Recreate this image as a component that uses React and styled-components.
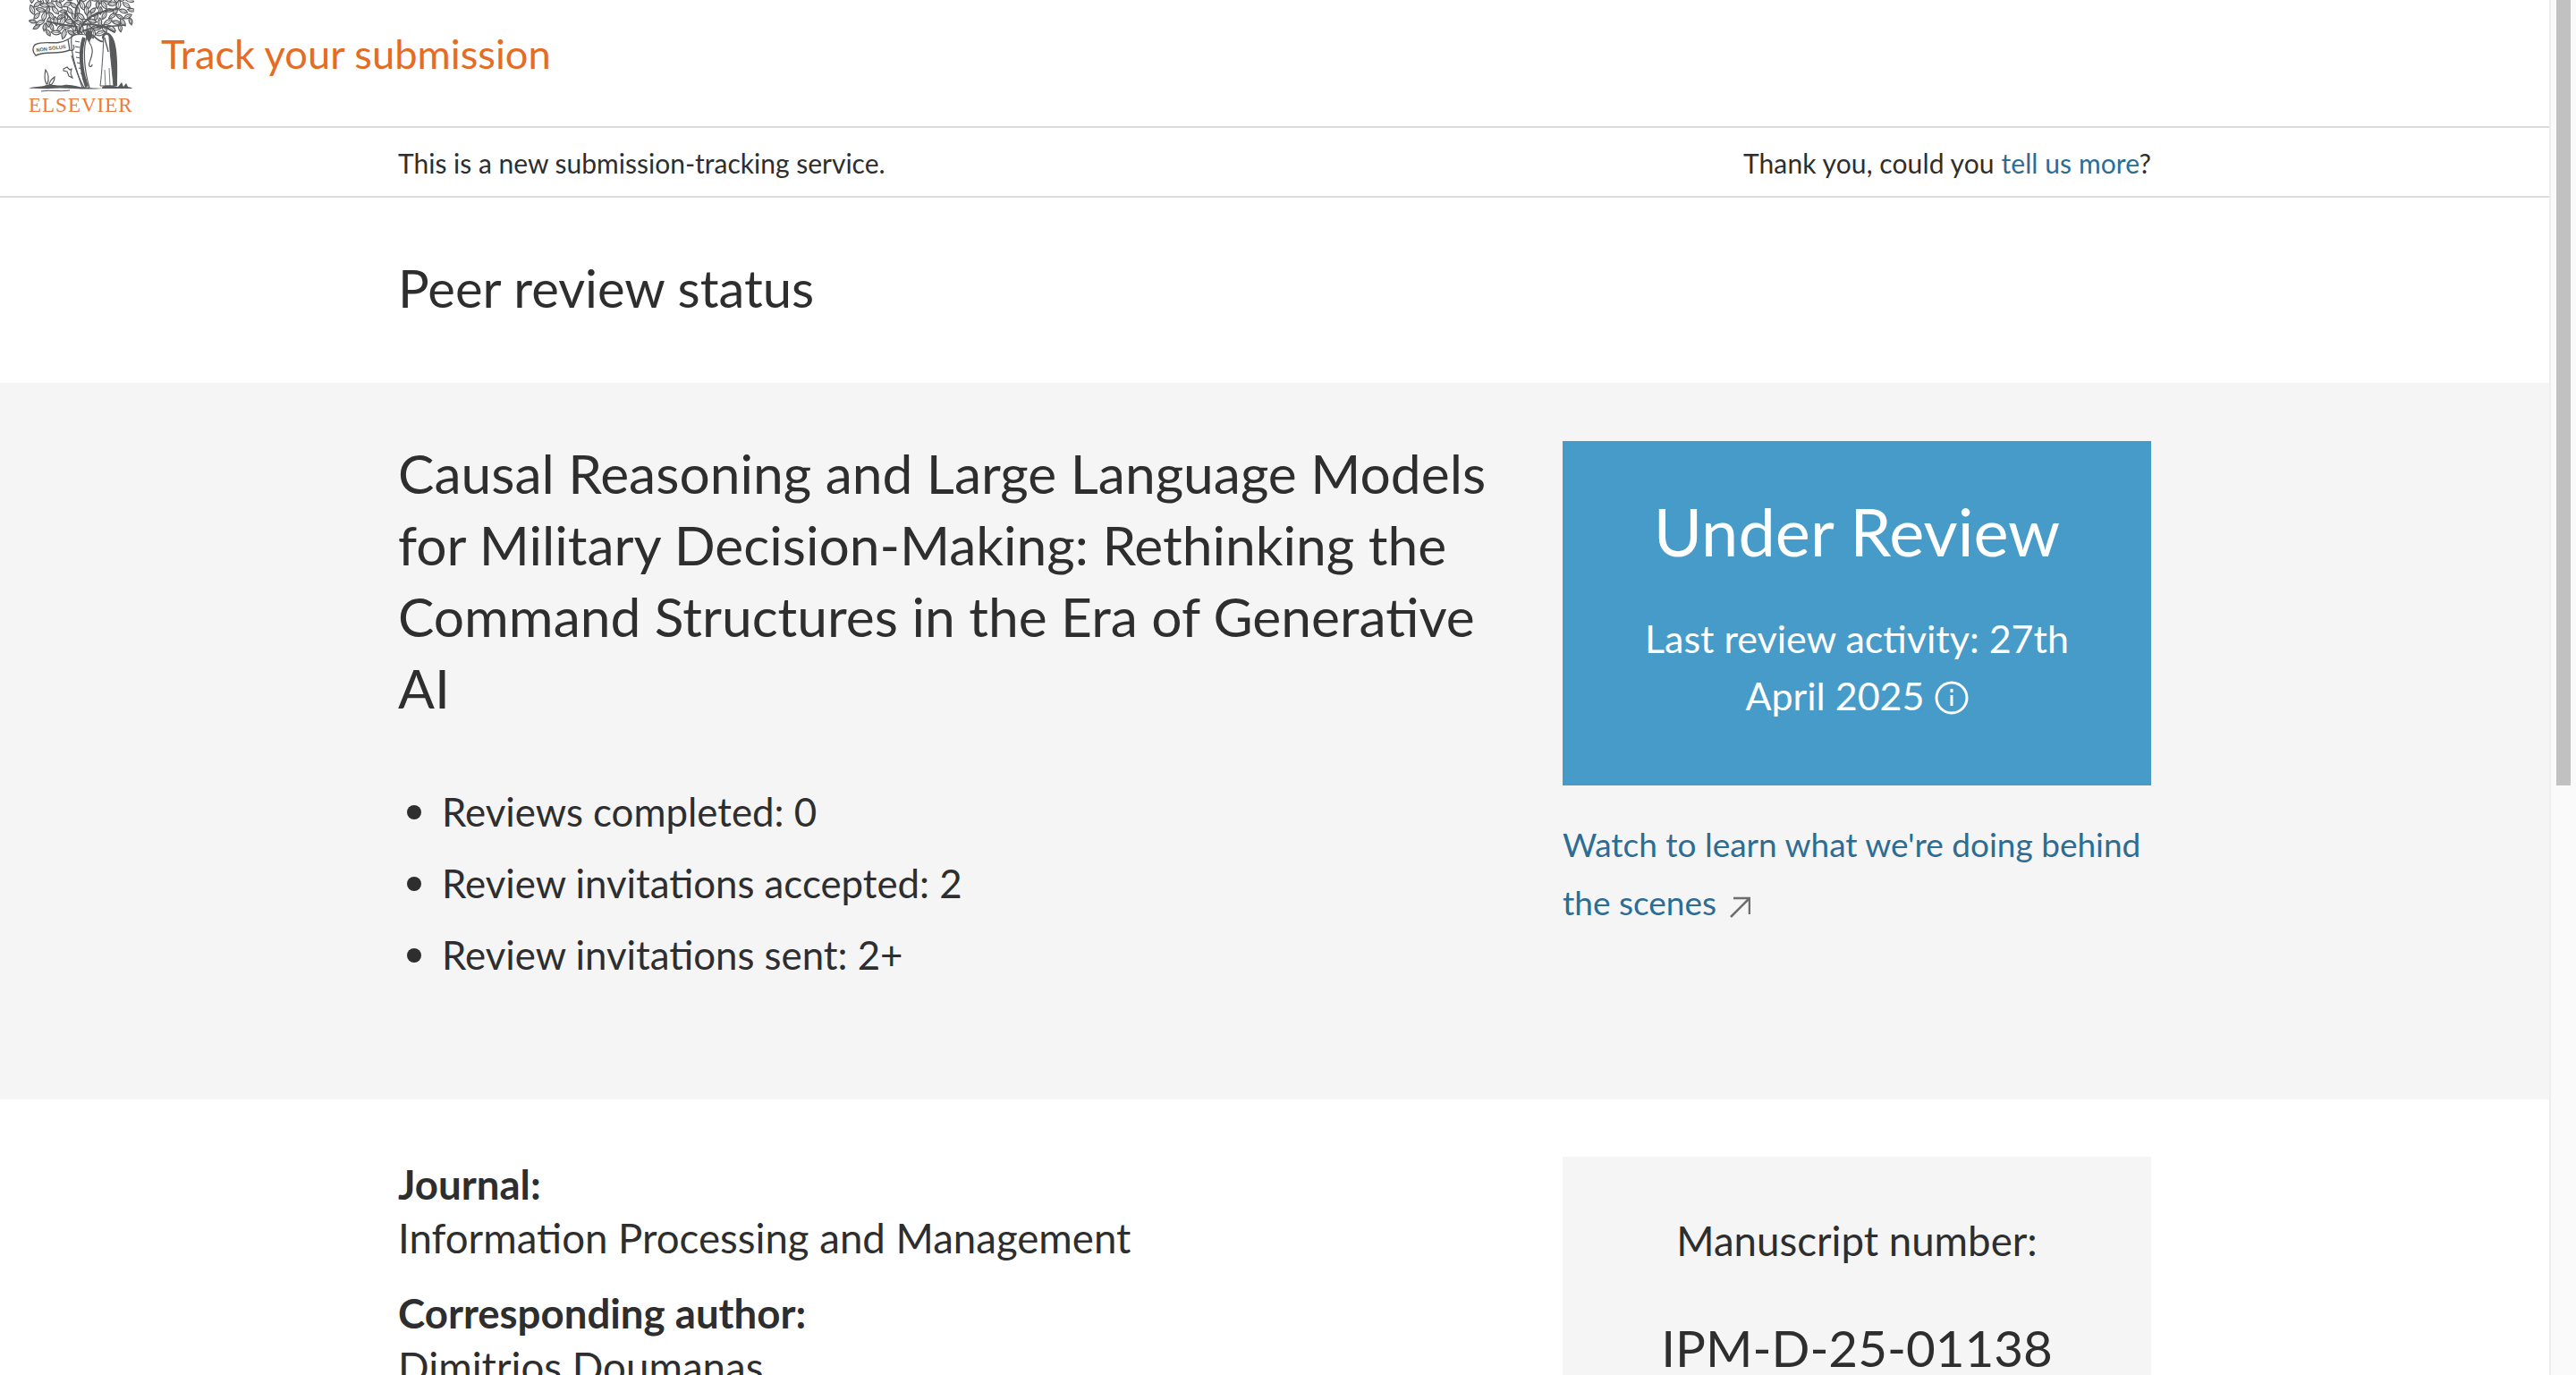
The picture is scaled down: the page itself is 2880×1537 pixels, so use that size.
import React from "react";
import styled, { createGlobalStyle } from "styled-components";

const Global = createGlobalStyle`
  html, body { margin: 0; padding: 0; height: 100%; overflow: hidden; background: #fff; }
  body { font-family: Lato, "Noto Sans", sans-serif; color: #2e2e2e; }
`;
const Shell = styled.div`display: flex; height: 1537px; overflow: hidden;`;
const Page = styled.main`flex: 1; min-width: 0; overflow: hidden;`;
const Track = styled.aside`flex: none; width: 30px; box-sizing: border-box; border-left: 2px solid #eee; background: #fafafa; padding-left: 6px;`;
const Thumb = styled.div`height: 878px; width: 16px; background: #c1c1c1;`;
const Header = styled.header`height: 141px; border-bottom: 2px solid #dcdcdc; display: flex; align-items: flex-start; padding-left: 32px; gap: 30px;`;
const Brand = styled.a`color: #e46c24; font-size: 45.3px; line-height: 120px;`;
const Wrap = styled.div`width: 1960px; margin: 0 auto;`;
const NoticeBar = styled.div`height: 76px; border-bottom: 2px solid #dcdcdc;`;
const NoticeRow = styled(Wrap)`display: flex; justify-content: space-between; align-items: center; height: 100%; box-sizing: border-box; padding-top: 2px; font-size: 30px;`;
const Feedback = styled.span`letter-spacing: 0.1px;`;
const Link = styled.a`color: #2d6c94;`;
const Heading = styled.h1`margin: 0; font-weight: 400; font-size: 58px; height: 207px; line-height: 202px;`;
const Band = styled.section`background: #f5f5f5; height: 801px; padding-top: 65px; box-sizing: border-box;`;
const Columns = styled(Wrap)`display: grid; grid-template-columns: 1fr 658px; column-gap: 47px;`;
const Title = styled.h2`margin: -4px 0 58px; font-weight: 400; font-size: 60.5px; line-height: 80px;`;
const Stats = styled.ul`margin: 0; padding: 0 0 0 49px; list-style: none; font-size: 43.8px; line-height: 80px;`;
const Stat = styled.li`
  position: relative;
  &::before {
    content: "";
    position: absolute;
    left: -39px;
    top: 33px;
    width: 16px;
    height: 16px;
    border-radius: 50%;
    background: #2e2e2e;
  }
`;
const StatusBox = styled.div`background: #479bc9; color: #fff; height: 385px; box-sizing: border-box; padding: 48px 20px 0; text-align: center;`;
const StatusTitle = styled.div`font-size: 74px; line-height: 106px; margin-bottom: 35px;`;
const StatusText = styled.div`font-size: 43px; line-height: 64px;`;
const Watch = styled(Link)`display: block; margin-top: 33px; font-size: 37px; line-height: 65px;`;
const Details = styled(Wrap)`display: grid; grid-template-columns: 1fr 658px; column-gap: 47px; padding-top: 64px;`;
const Label = styled.div`font-weight: 700; font-size: 45.6px; line-height: 61px;`;
const Value = styled.div`font-size: 45.6px; line-height: 60px; margin-bottom: 23px;`;
const Card = styled.div`background: #f5f5f5; text-align: center; padding-top: 62px; height: 400px;`;
const CardLabel = styled.div`font-size: 45.6px; line-height: 64px;`;
const CardValue = styled.div`font-size: 56.5px; line-height: 80px; margin-top: 47px;`;

const ink = "#58595b";
const hash = (a, b) => {
  const v = Math.sin(a * 12.9898 + b * 78.233) * 43758.5453;
  return v - Math.floor(v);
};
const leaves = [];
for (let r = 0; r < 7; r++) {
  for (let c = 0; c < 14; c++) {
    const x = 4 + c * 8.4 + (r % 2) * 4 + hash(r, c) * 2;
    const y = -2 + r * 6.4 + hash(c, r) * 2;
    const inside = Math.abs((x - 58) / 60) ** 3 + Math.abs((y - 10) / 29) ** 3 < 1;
    if (inside) leaves.push({ x, y, a: hash(r + 3, c + 7) * 180, l: 4.2 + hash(c + 5, r + 1) * 1.6 });
  }
}

const Logo = () => (
  <svg width="118" height="130" viewBox="0 0 118 130" style={{ flex: "none" }}>
    {leaves.map((f, i) => (
      <g key={i} transform={`translate(${f.x} ${f.y}) rotate(${f.a})`}>
        <path d={`M${-f.l} 0Q0 ${-f.l * 0.85} ${f.l} 0Q0 ${f.l * 0.85} ${-f.l} 0Z`} fill="#fff" stroke={ink} strokeWidth="1.2" />
        <path d={`M${-f.l * 0.6} 0H${f.l * 0.6}`} stroke={ink} strokeWidth=".7" />
      </g>
    ))}
    <g fill="none" stroke={ink} strokeLinecap="round">
      <path d="M56 40C55 30 50 22 40 14M56 38C58 26 66 20 78 14M54 30C46 28 34 28 22 24M60 28C70 26 84 28 96 36M52 20C52 12 54 6 58 0M72 18C80 14 88 10 100 10" strokeWidth="2" />
      <path d="M62 34C72 30 88 30 108 28" strokeWidth="1.5" />
    </g>
    <path d="M48 40C56 38 62 38 66 40C60 52 62 78 68 98H60C54 80 46 58 48 40Z" fill="#fff" stroke={ink} strokeWidth="1.2" />
    <path d="M62 42C57 56 58 78 65 97" fill="none" stroke={ink} strokeWidth="4" />
    <path d="M52 46l5 1M52 52l5 1M52 58l5 1M53 64l5 1M54 70l5 1M56 76l5 1M58 82l5 1M60 88l5 1" stroke={ink} strokeWidth="1.1" />
    <path d="M48 62C52 76 56 88 62 98" fill="none" stroke={ink} strokeWidth="1.1" />
    <g fill="none" stroke={ink} strokeWidth="1.2">
      <path d="M68 40V48M68 48C74 56 70 64 68 70C66 75 71 76 71 72" />
      <path d="M84 46C80 48 75 42 70 38" strokeWidth="1.6" />
    </g>
    <path d="M64 36l3-3 3 3 1 6-4 5-3-5Z" fill={ink} />
    <path d="M82 42C82 37 88 35 91 38C98 44 100 60 99 96H93C94 80 92 62 88 50C86 48 83 46 82 42Z" fill={ink} />
    <path d="M84 42C84 38 89 37 90 41L91 56L95 96H80C82 80 83 60 84 42Z" fill="#fff" stroke={ink} strokeWidth="1" />
    <path d="M85 42C86 48 88 52 89 58" fill="none" stroke={ink} strokeWidth="1.4" />
    <path d="M85 78l1 18M90 76l1 20" stroke={ink} strokeWidth=".8" />
    <path d="M82 98C84 95 90 95 100 97L99 99H82Z" fill={ink} />
    <g>
      <path d="M7 50C20 44 30 52 44 44L46 56C32 62 20 56 8 62C4 58 4 53 7 50Z" fill="#fff" stroke={ink} strokeWidth="1.4" />
      <text x="25" y="56" fontFamily="Liberation Sans, sans-serif" fontSize="5.6" fontWeight="700" textAnchor="middle" fill={ink} transform="rotate(-7 25 54)">NON SOLUS</text>
      <path d="M44 44C48 42 50 40 52 38M46 56C50 58 52 54 50 50" fill="none" stroke={ink} strokeWidth="1.2" />
    </g>
    <path d="M20 94C17 88 18 82 19 78C22 82 23 88 21 94ZM23 94C24 90 26 88 29 86C29 90 27 93 25 95Z" fill="#fff" stroke={ink} strokeWidth="1.2" />
    <path d="M39 77l4-2 3 3 2-1-1 5 2 5-4-2-2-5-4-1Z" fill="#fff" stroke={ink} strokeWidth="1.1" />
    <path d="M0 99C6 96 12 98 20 95C26 93 32 97 40 95C48 94 56 98 66 98C78 99 90 99 100 97L104 92L106 97L109 93L111 97L115 98L116 99H82C60 101 40 97 24 99C16 100 8 98 0 99Z" fill={ink} />
    <path d="M14 102C26 100 34 103 46 101" fill="none" stroke={ink} strokeWidth="1" />
    <text x="0" y="125" fontFamily="Liberation Serif, serif" fontSize="23" letterSpacing="1" fill="#ee7a36">ELSEVIER</text>
  </svg>
);
const Info = () => (
  <svg width="38" height="38" viewBox="0 0 38 38" style={{ verticalAlign: "-5px" }} fill="none" stroke="#fff" strokeWidth="3">
    <circle cx="19" cy="19" r="17" />
    <path d="M19 16v12M19 9v4" />
  </svg>
);
const Ext = () => (
  <svg width="24" height="24" viewBox="0 0 24 24" style={{ verticalAlign: "-3px", marginLeft: 4 }} fill="none" stroke="#6e6e6e" strokeWidth="2.5">
    <path d="M2 23L22 3M5 2h18v18" />
  </svg>
);

export default function App() {
  return (
    <Shell>
      <Global />
      <Page>
        <Header><Logo /><Brand>Track your submission</Brand></Header>
        <NoticeBar>
          <NoticeRow>
            <span>This is a new submission-tracking service.</span>
            <Feedback>Thank you, could you <Link>tell us more</Link>?</Feedback>
          </NoticeRow>
        </NoticeBar>
        <Wrap><Heading>Peer review status</Heading></Wrap>
        <Band>
          <Columns>
            <div>
              <Title>Causal Reasoning and Large Language Models<br />for Military Decision-Making: Rethinking the<br />Command Structures in the Era of Generative<br />AI</Title>
              <Stats>
                <Stat>Reviews completed: 0</Stat>
                <Stat>Review invitations accepted: 2</Stat>
                <Stat>Review invitations sent: 2+</Stat>
              </Stats>
            </div>
            <div>
              <StatusBox>
                <StatusTitle>Under Review</StatusTitle>
                <StatusText>Last review activity: 27th<br />April 2025 <Info /></StatusText>
              </StatusBox>
              <Watch>Watch to learn what we're doing behind<br />the scenes <Ext /></Watch>
            </div>
          </Columns>
        </Band>
        <Details>
          <div>
            <Label>Journal:</Label>
            <Value>Information Processing and Management</Value>
            <Label>Corresponding author:</Label>
            <Value>Dimitrios Doumanas</Value>
          </div>
          <Card>
            <CardLabel>Manuscript number:</CardLabel>
            <CardValue>IPM-D-25-01138</CardValue>
          </Card>
        </Details>
      </Page>
      <Track><Thumb /></Track>
    </Shell>
  );
}
